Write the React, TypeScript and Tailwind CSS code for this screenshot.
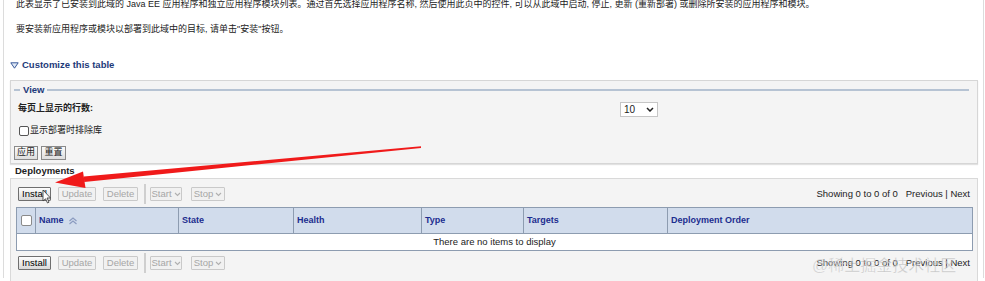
import React from "react";

const FONT = { fontFamily: '"Liberation Sans", "Noto Sans CJK SC", Arial, sans-serif' };

const COLUMNS = [
  { label: "Name", w: "w-[143px]", sort: true },
  { label: "State", w: "w-[115px]" },
  { label: "Health", w: "w-[128px]" },
  { label: "Type", w: "w-[102px]" },
  { label: "Targets", w: "w-[144px]" },
  { label: "Deployment Order", w: "flex-1" },
];

function Caret() {
  return (
    <svg width="7" height="5" viewBox="0 0 7 5" className="ml-[2px]">
      <path d="M1 1 L3.5 3.5 L6 1" fill="none" stroke="#b0b0b0" strokeWidth="1.1" />
    </svg>
  );
}

function Toolbar() {
  const off = "h-[14px] box-border border border-[#c9c9c9] bg-[#f1f1f1] text-[#a6a6a6] flex items-center justify-center text-[9.5px] rounded-[1px]";
  return (
    <div className="h-[22px] flex items-center pl-[7px] pr-[7px]">
      <div className="w-[33px] h-[14px] box-border border border-[#6f6f6f] bg-gradient-to-b from-[#fdfdfd] to-[#d9d9d9] text-black flex items-center justify-center text-[9.5px] rounded-[1px]">
        Install
      </div>
      <div className={`${off} w-[38px] ml-[7px]`}>Update</div>
      <div className={`${off} w-[35px] ml-[7px]`}>Delete</div>
      <div className="w-[2px] h-[20px] bg-[#cfcfcf] ml-[6px]" />
      <div className={`${off} w-[32px] ml-[4px]`}>Start<Caret /></div>
      <div className={`${off} w-[34px] ml-[9px]`}>Stop<Caret /></div>
      <div className="ml-auto text-[9.5px] text-[#222] whitespace-pre">Showing 0 to 0 of 0   Previous | Next</div>
    </div>
  );
}

export default function App() {
  return (
    <div className="relative w-[985px] h-[281px] overflow-hidden bg-white text-[#222]" style={FONT}>
      <div className="ml-[3px] w-[981px] h-full box-border border-x border-[#dcdcdc]">
        <p className="pl-[12px] -mt-[3px] h-[14px] leading-[14px] text-[9px] whitespace-nowrap">
          此表显示了已安装到此域的 Java EE 应用程序和独立应用程序模块列表。通过首先选择应用程序名称, 然后使用此页中的控件, 可以从此域中启动, 停止, 更新 (重新部署) 或删除所安装的应用程序和模块。
        </p>
        <p className="pl-[12px] mt-[11px] h-[14px] leading-[14px] text-[9px]">
          要安装新应用程序或模块以部署到此域中的目标, 请单击"安装"按钮。
        </p>
        <div className="mt-[22px] h-[14px] flex items-center pl-[6px] text-[9.5px] font-bold text-[#1d3a7a]">
          <svg width="9" height="7" viewBox="0 0 9 7" className="mr-[3px]">
            <path d="M0.8 0.8 H8.2 L4.5 6.2 Z" fill="#dfe8f5" stroke="#3a5a9a" strokeWidth="1" />
          </svg>
          Customize this table
        </div>

        <div className="mt-[8px] ml-[6px] mr-[5px] h-[84px] box-border border border-[#d6d6d6] bg-[#f4f4f4] shadow-[0_1px_1px_#e2e2e2]">
          <div className="mt-[2px] h-[14px] flex items-center pl-[3px] pr-[8px]">
            <div className="w-[6px] h-[2px] bg-[#b6c3d3]" />
            <span className="px-[3px] text-[9.5px] font-bold text-[#1d3a7a]">View</span>
            <div className="flex-1 h-[2px] bg-[#b6c3d3]" />
          </div>
          <div className="mt-[4px] h-[16px] flex items-center pl-[7px]">
            <span className="w-[602px] text-[9px] font-bold">每页上显示的行数:</span>
            <div className="w-[38px] h-[15px] box-border border border-[#c6c6c6] bg-white flex items-center justify-between px-[3px] text-[10px]">
              <span>10</span>
              <svg width="8" height="5" viewBox="0 0 8 5">
                <path d="M1 1 L4 4 L7 1" fill="none" stroke="#222" strokeWidth="1.5" />
              </svg>
            </div>
          </div>
          <div className="mt-[7px] h-[14px] flex items-center pl-[8px] text-[9px]">
            <div className="w-[10px] h-[10px] box-border border border-[#555] rounded-[2px] bg-white" />
            <span className="ml-[1px]">显示部署时排除库</span>
          </div>
          <div className="mt-[8px] h-[14px] flex items-center pl-[3px] gap-[3px] text-[9px]">
            <div className="w-[24px] h-[14px] box-border border border-[#8a8a8a] bg-gradient-to-b from-[#fafafa] to-[#dedede] flex items-center justify-center">应用</div>
            <div className="w-[25px] h-[14px] box-border border border-[#8a8a8a] bg-gradient-to-b from-[#fafafa] to-[#dedede] flex items-center justify-center">重置</div>
          </div>
        </div>

        <div className="mt-[1px] h-[12px] leading-[12px] pl-[11px] text-[9.5px] font-bold">Deployments</div>

        <div className="mt-[1px] ml-[6px] mr-[5px] h-[104px] box-border border border-[#d9d9d9] bg-[#f4f4f4]">
          <div className="mt-[4px]">
            <Toolbar />
          </div>
          <div className="mt-[2px] ml-[5px] mr-[4px] box-border border border-[#8d9cb0] bg-white">
            <div className="flex h-[26px] bg-[#d1dcec] border-b border-[#8d9cb0]">
              <div className="w-[19px] flex items-center justify-center border-r border-[#8d9cb0]">
                <div className="w-[11px] h-[11px] box-border border border-[#8a8a8a] rounded-[2px] bg-white" />
              </div>
              {COLUMNS.map((c, i) => (
                <div
                  key={c.label}
                  className={`${c.w} flex items-center pl-[3px] text-[9px] font-bold text-[#1c2d8f] ${i < COLUMNS.length - 1 ? "border-r border-[#8d9cb0]" : ""}`}
                >
                  {c.label}
                  {c.sort && (
                    <svg width="10" height="8" viewBox="0 0 10 8" className="ml-[4px]">
                      <path d="M1.5 4 L5 1 L8.5 4 M1.5 7 L5 4 L8.5 7" fill="none" stroke="#8b9bc0" strokeWidth="1.2" />
                    </svg>
                  )}
                </div>
              ))}
            </div>
            <div className="h-[16px] flex items-center justify-center text-[9.5px]">There are no items to display</div>
          </div>
          <div className="mt-[1px]">
            <Toolbar />
          </div>
        </div>
      </div>

      <svg className="absolute left-0 top-0 pointer-events-none" width="985" height="281" viewBox="0 0 985 281">
        <polygon points="421,146.2 421,147.9 84.2,182 83.8,176.4" fill="#f01a1a" />
        <polygon points="55,182.5 83,171.5 85.5,188" fill="#f01a1a" />
        <path d="M43 190 L43 201 L45.5 198.8 L47.5 203 L49 202.2 L47 198 L50.5 198 Z" fill="#fff" stroke="#333" strokeWidth="0.8" />
      </svg>

      <div className="absolute left-[812px] top-[256px] text-[16px] leading-[20px] text-[rgba(160,160,160,0.55)] pointer-events-none" style={{ ...FONT, WebkitTextStroke: "0.4px rgba(255,255,255,0.7)" }}>
        @稀土掘金技术社区
      </div>
    </div>
  );
}
